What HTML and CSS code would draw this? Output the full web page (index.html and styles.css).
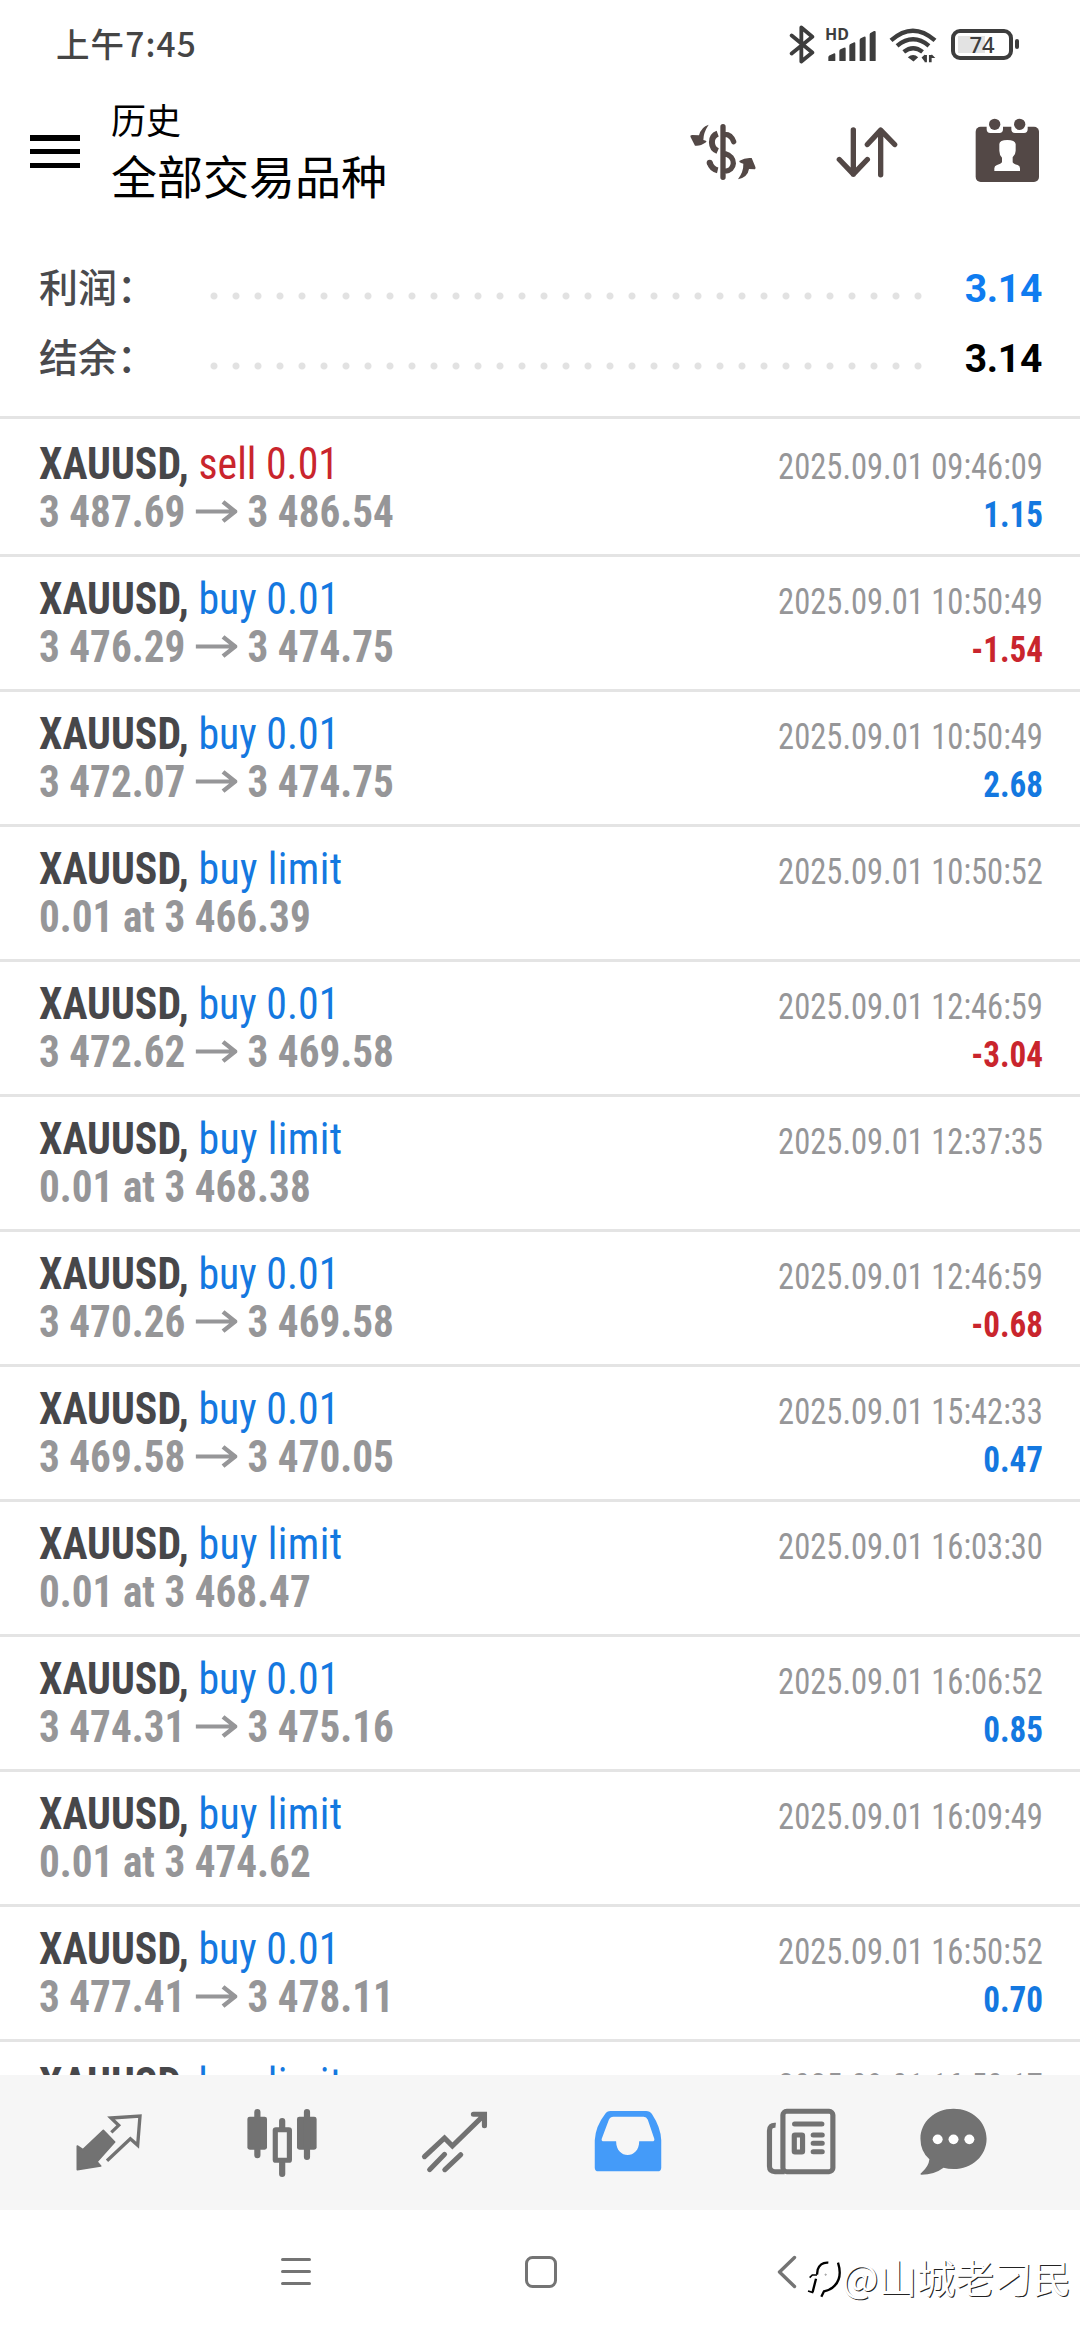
FILE: index.html
```html
<!DOCTYPE html>
<html lang="zh-CN">
<head>
<meta charset="utf-8">
<title>历史</title>
<link rel="stylesheet" href="styles.css">
</head>
<body>
<div class="screen">
  <header class="status">
    <span class="clock">上午7:45</span>
    <div class="indicators">
      <svg class="bt" viewBox="24 40 78 122" fill="none" stroke="#3d3d3d" stroke-width="11.500" stroke-linecap="round" stroke-linejoin="round"><path d="M32 74 94 125 61 152V50L94 78 32 128"/></svg>
      <div class="signal">
        <span class="hd">HD</span>
        <svg class="bars" viewBox="141 56 144 94" fill="#3d3d3d"><path d="M142 136q2-4 8-6l8-4q5-2 5 3v18q0 3-4 3h-17zM175 119q0-4 5-6l9-4q5-2 5 3v35q0 3-4 3h-11q-4 0-4-3zM205 103q0-4 5-6l8-4q5-2 5 3v51q0 3-4 3h-10q-4 0-4-3zM236 86q0-4 5-6l8-4q5-2 5 3v68q0 3-4 3h-10q-4 0-4-3zM266 69q0-4 5-6l8-4q5-2 5 3v85q0 3-4 3h-10q-4 0-4-3z"/></svg>
      </div>
      <svg class="wifi" viewBox="321 48 143 110" fill="none" stroke="#3d3d3d"><path stroke-width="13" d="M327 91q65-58 131 0"/><path stroke-width="13" d="M345 107q48-39 95 0"/><path stroke-width="13" d="M365 125q28-22 56 0"/><path fill="#3d3d3d" stroke="none" d="M377 141q16-14 31 0l-14 13zM418 142l10-9 0 22zM428 134h6v22h-7zM440 134l8 0v22h-8zM448 132l11 11h-11z"/></svg>
      <div class="battery"><span class="level">74</span></div>
      <span class="tip"></span>
    </div>
  </header>

  <div class="appbar">
    <div class="burger"><i></i><i></i><i></i></div>
    <div class="titles"><div class="t1">历史</div><div class="t2">全部交易品种</div></div>
    <svg class="money" viewBox="24 39 204 174" fill="#534846"><path d="M83 44Q61 50 54 76L34 75Q26 75 29 82L42 107Q56 110 75 97Q80 93 67 90Q67 68 83 44ZM171 208Q200 202 204 177L222 178Q226 176 222 168L212 144Q192 142 176 152Q171 156 187 161Q188 184 171 208Z"/><path fill="none" stroke="#534846" stroke-width="16" stroke-linecap="round" d="M126 50V202M130 73Q150 72 158 95M130 130C168 140 164 182 130 184"/><path fill="none" stroke="#534846" stroke-width="18" d="M110 71C86 80 88 114 110 123M86 158Q92 177 110 181"/><circle cx="86" cy="158" r="9"/></svg>
    <svg class="sort" viewBox="462 48 186 155" fill="none" stroke="#534846" stroke-width="16" stroke-linecap="round" stroke-linejoin="round"><path d="M514 59V192M472 148 514 192 556 148M596 194V60M556 103 596 60 638 103"/></svg>
    <svg class="cal" viewBox="1003 355 195 195" fill="#534846"><rect x="1005" y="381" width="190" height="166" rx="15"/><path fill="#fff" d="M1038 379h49v10q0 11-11 11h-27q-11 0-11-11zM1112 379h49v10q0 11-11 11h-27q-11 0-11-11z"/><circle cx="1062" cy="374" r="17"/><circle cx="1137" cy="374" r="17"/><path fill="#fff" d="M1076 433q1-12 24-12t25 12v20q0 12-9 20v15q2 5 15 8 7 2 7 10v8h-77v-8q0-8 8-10 12-3 15-8v-14q-8-9-8-21z"/></svg>
  </div>

  <section class="summary">
    <div class="sum"><span class="lbl">利润：</span><span class="dots"></span><b class="blue">3.14</b></div>
    <div class="sum"><span class="lbl">结余：</span><span class="dots"></span><b>3.14</b></div>
  </section>

  <svg class="defs" width="0" height="0"><symbol id="arr" viewBox="0 0 42 24" preserveAspectRatio="none"><path d="M0 12H39M27.500 2 39.500 12 27.500 22" fill="none" stroke="#969698" stroke-width="4.400"/></symbol></svg>

  <main class="list">
    <article class="row"><div class="ln"><p><b>XAUUSD,</b> <span class="sell">sell 0.01</span></p><time>2025.09.01 09:46:09</time></div><div class="ln"><p class="price">3 487.69<svg class="arr"><use href="#arr"/></svg>3 486.54</p><b class="pl">1.15</b></div></article>
    <article class="row"><div class="ln"><p><b>XAUUSD,</b> <span class="buy">buy 0.01</span></p><time>2025.09.01 10:50:49</time></div><div class="ln"><p class="price">3 476.29<svg class="arr"><use href="#arr"/></svg>3 474.75</p><b class="pl neg">-1.54</b></div></article>
    <article class="row"><div class="ln"><p><b>XAUUSD,</b> <span class="buy">buy 0.01</span></p><time>2025.09.01 10:50:49</time></div><div class="ln"><p class="price">3 472.07<svg class="arr"><use href="#arr"/></svg>3 474.75</p><b class="pl">2.68</b></div></article>
    <article class="row"><div class="ln"><p><b>XAUUSD,</b> <span class="buy limit">buy limit</span></p><time>2025.09.01 10:50:52</time></div><div class="ln"><p class="price">0.01 at 3 466.39</p></div></article>
    <article class="row"><div class="ln"><p><b>XAUUSD,</b> <span class="buy">buy 0.01</span></p><time>2025.09.01 12:46:59</time></div><div class="ln"><p class="price">3 472.62<svg class="arr"><use href="#arr"/></svg>3 469.58</p><b class="pl neg">-3.04</b></div></article>
    <article class="row"><div class="ln"><p><b>XAUUSD,</b> <span class="buy limit">buy limit</span></p><time>2025.09.01 12:37:35</time></div><div class="ln"><p class="price">0.01 at 3 468.38</p></div></article>
    <article class="row"><div class="ln"><p><b>XAUUSD,</b> <span class="buy">buy 0.01</span></p><time>2025.09.01 12:46:59</time></div><div class="ln"><p class="price">3 470.26<svg class="arr"><use href="#arr"/></svg>3 469.58</p><b class="pl neg">-0.68</b></div></article>
    <article class="row"><div class="ln"><p><b>XAUUSD,</b> <span class="buy">buy 0.01</span></p><time>2025.09.01 15:42:33</time></div><div class="ln"><p class="price">3 469.58<svg class="arr"><use href="#arr"/></svg>3 470.05</p><b class="pl">0.47</b></div></article>
    <article class="row"><div class="ln"><p><b>XAUUSD,</b> <span class="buy limit">buy limit</span></p><time>2025.09.01 16:03:30</time></div><div class="ln"><p class="price">0.01 at 3 468.47</p></div></article>
    <article class="row"><div class="ln"><p><b>XAUUSD,</b> <span class="buy">buy 0.01</span></p><time>2025.09.01 16:06:52</time></div><div class="ln"><p class="price">3 474.31<svg class="arr"><use href="#arr"/></svg>3 475.16</p><b class="pl">0.85</b></div></article>
    <article class="row"><div class="ln"><p><b>XAUUSD,</b> <span class="buy limit">buy limit</span></p><time>2025.09.01 16:09:49</time></div><div class="ln"><p class="price">0.01 at 3 474.62</p></div></article>
    <article class="row"><div class="ln"><p><b>XAUUSD,</b> <span class="buy">buy 0.01</span></p><time>2025.09.01 16:50:52</time></div><div class="ln"><p class="price">3 477.41<svg class="arr"><use href="#arr"/></svg>3 478.11</p><b class="pl">0.70</b></div></article>
    <article class="row"><div class="ln"><p><b>XAUUSD,</b> <span class="buy limit">buy limit</span></p><time>2025.09.01 16:50:17</time></div></article>
  </main>

  <nav class="tabs">
    <div class="tab"><svg width="72" height="72" viewBox="37 36 216 216"><path fill="#727272" stroke="#727272" stroke-width="5" stroke-linejoin="round" d="M128 106 162 141 109 200 120 213 50 224V153L67 164Z"/><path fill="none" stroke="#727272" stroke-width="10" stroke-linejoin="miter" d="M152 112 174 91 151 69 238 63 231 151 209 131 139 197"/></svg></div>
    <div class="tab"><svg width="72" height="72" viewBox="711 198 209 216" preserveAspectRatio="none" fill="#727272" stroke-linecap="round"><rect x="715" y="227" width="57" height="99" rx="7"/><rect x="859" y="227" width="57" height="99" rx="7"/><path stroke="#727272" stroke-width="18" d="M744 213V343M888 213V348M816 240V262M816 366V399"/><rect x="796" y="266" width="41" height="92" rx="2" fill="#f6f6f6" stroke="#727272" stroke-width="15"/></svg></div>
    <div class="tab"><svg width="72" height="72" viewBox="1215 198 209 216" preserveAspectRatio="none" fill="none" stroke="#727272" stroke-width="15" stroke-linecap="round" stroke-linejoin="miter"><path d="M1231 347 1289 291 1312 315 1404 222M1373 220H1405V254M1246 386 1289 340M1290 386 1336 341"/></svg></div>
    <div class="tab"><svg width="72" height="72" viewBox="150 200 209 216" preserveAspectRatio="none"><path fill="#449bf9" fill-rule="evenodd" d="M204 212H307Q318 212 324 221Q350 262 351 300V382Q351 393 340 393H169Q158 393 158 382V300Q160 258 188 221Q193 212 204 212ZM212 229Q203 229 199 238L178 296Q177 303 184 303H220C220 358 287 358 287 303H325Q332 303 331 296L312 238Q308 229 300 229Z"/></svg></div>
    <div class="tab"><svg width="72" height="72" viewBox="653 199 209 216" preserveAspectRatio="none" fill="none" stroke="#727272" stroke-width="15"><rect x="705" y="212" width="145" height="181" rx="11"/><path d="M684 254Q666 252 666 270V377Q666 393 682 393H710"/><path stroke-linecap="round" d="M739 250H818M793 283H819M793 308H819M793 333H819"/><rect x="738" y="283" width="24" height="51" rx="2"/></svg></div>
    <div class="tab last"><svg width="72" height="72" viewBox="1093 199 209 216" preserveAspectRatio="none"><path fill="#727272" d="M1199 204C1253 204 1295 243 1295 294S1253 385 1199 385Q1183 385 1170 381Q1143 402 1106 402Q1100 401 1106 396Q1127 378 1129 356Q1103 332 1103 294C1103 243 1145 204 1199 204Z"/><g fill="#fff"><circle cx="1153" cy="296" r="14.500"/><circle cx="1199" cy="296" r="14.500"/><circle cx="1245" cy="296" r="14.500"/></g></svg></div>
  </nav>

  <footer class="sysnav">
    <svg width="34" height="34" viewBox="0 0 34 34" fill="none" stroke="#747474" stroke-width="3" stroke-linecap="round"><path d="M3.500 4.500H30.500M3.500 16.500H30.500M3.500 28.500H30.500"/></svg>
    <svg width="34" height="34" viewBox="0 0 34 34" fill="none" stroke="#747474" stroke-width="3"><rect x="2.500" y="2.500" width="29" height="29" rx="6"/></svg>
    <svg width="34" height="34" viewBox="0 0 34 34" fill="none" stroke="#747474" stroke-width="3.400" stroke-linecap="round" stroke-linejoin="round"><path d="M25.500 2.500 10.500 17 25.500 31.500"/></svg>
  </footer>

  <div class="mark">
    <svg width="36" height="42" viewBox="106 74 108 126" fill="none" stroke="#000"><path stroke-width="7" d="M173 82Q149 80 141 103L139 118M136 130 126 170"/><path stroke-width="5" d="M117 127 125 119H139M112 167 128 172"/><path stroke-width="7" d="M202 82Q216 126 192 151Q180 164 160 168L152 184"/><circle cx="165" cy="118" r="2"/></svg>
    <span>@山城老刁民</span>
  </div>
</div>
</body>
</html>
```
FILE: styles.css
```css
* { box-sizing: border-box; margin: 0; padding: 0; }
html, body { width: 1080px; height: 2340px; overflow: hidden; background: #fff; }
body { font-family: Roboto, "Noto Sans CJK SC", sans-serif; }
svg { display: block; flex: none; }
.defs { position: absolute; }
.screen { position: relative; width: 1080px; height: 2340px; display: flex; flex-direction: column; background: #fff; }

.status { height: 88px; flex: none; display: flex; align-items: center; justify-content: space-between; padding: 0 61px 0 56px; }
.clock { font: 500 33.500px/40px "Noto Sans CJK SC", sans-serif; color: #454545; letter-spacing: 1.1px; margin-top: -2px; }
.indicators { display: flex; align-items: center; height: 40px; }
.bt { width: 26px; height: 41px; margin-right: 10px; }
.signal { position: relative; width: 51px; height: 34px; margin-right: 13px; display: flex; justify-content: flex-end; align-items: flex-end; }
.bars { width: 48px; height: 31.500px; }
.hd { position: absolute; left: 0; top: -3px; font: 700 16px/20px "Noto Sans", sans-serif; color: #3d3d3d; }
.wifi { width: 48px; height: 37px; margin-right: 14px; }
.battery { width: 62px; height: 31px; border: 4px solid #3d3d3d; border-radius: 9px; padding: 3px; }
.level { display: flex; align-items: center; justify-content: center; width: 48px; height: 17px; font: 500 22px/17px "Noto Sans", sans-serif; color: #3d3d3d; background: linear-gradient(90deg, #e3e3e3 27px, transparent 27px); }
.tip { width: 4px; height: 10px; border-radius: 2px; background: #3d3d3d; margin-left: 2px; }

.appbar { height: 152px; flex: none; display: flex; padding: 0 40px 0 30px; }
.burger { width: 50px; height: 33px; margin: 47px 31px 0 0; display: flex; flex-direction: column; justify-content: space-between; }
.burger i { height: 5.500px; background: #000; }
.titles { font-family: "Noto Sans CJK SC", sans-serif; color: #000; flex: 1; padding-top: 9px; }
.t1 { font-size: 35px; line-height: 44px; }
.t2 { font-size: 46px; line-height: 66px; }
.money { width: 68px; height: 58px; margin: 35px 79px 0 0; }
.sort { width: 62px; height: 52px; margin: 38px 77px 0 0; }
.cal { width: 65px; height: 65px; margin-top: 30px; }

.summary { height: 179px; flex: none; border-bottom: 3px solid #e4e4e4; padding: 13px 38px 0 39px; }
.sum { height: 70px; display: flex; align-items: center; font-size: 39px; }
.lbl { width: 171px; font: 500 39px/70px "Noto Sans CJK SC", sans-serif; color: #4a4a4d; margin-top: -6px; }
.dots { width: 726px; height: 8px; margin-top: 15px; background: radial-gradient(circle at 4px 4px, #e2e2e2 3px, transparent 4px) 0 0 / 22px 8px; }
.sum b { flex: 1; text-align: right; letter-spacing: -0.300px; padding-top: 2px; }
.blue { color: #0f7cf0; }

.list { flex: 1; min-height: 0; overflow: hidden; }
.row { height: 135px; border-bottom: 3px solid #e4e4e4; padding: 18px 37px 0 39px; font-family: "Roboto Condensed", Roboto, sans-serif; font-stretch: 75%; }
.row:first-child { height: 138px; padding-top: 21px; }
.ln { height: 48px; display: flex; justify-content: space-between; align-items: baseline; font-size: 45px; line-height: 48px; white-space: nowrap; color: #47474a; }
.ln p { transform: scaleX(0.93); transform-origin: left; }
.limit { letter-spacing: 0.400px; }
.ln .price { font-weight: 700; color: #969698; transform: scaleX(0.915); }
.arr { display: inline-block; width: 46px; height: 23px; margin: 0 11px; vertical-align: 4px; }
time, .pl { font-size: 36px; transform-origin: right; }
time { color: #969698; transform: scaleX(0.904); }
.pl { color: #1478e0; transform: scaleX(0.92); }
.sell, .neg { color: #c9252d; }
.buy { color: #1478e0; }

.tabs { height: 135px; flex: none; background: #f6f6f6; display: flex; padding: 0 0 0 22px; }
.tab { width: 173px; display: flex; align-items: center; justify-content: center; }
.tab.last { width: 131px; }
.sysnav { height: 130px; flex: none; display: flex; gap: 211px; padding: 45px 0 0 279px; }

.mark { position: absolute; left: 806px; top: 2248px; display: flex; align-items: center; }
.mark svg { margin-top: 10px; }
.mark span { font: 400 38.500px/56px "Noto Sans CJK SC", sans-serif; color: #fff; text-shadow: 1px 1px 0 #222; white-space: nowrap; }
```
